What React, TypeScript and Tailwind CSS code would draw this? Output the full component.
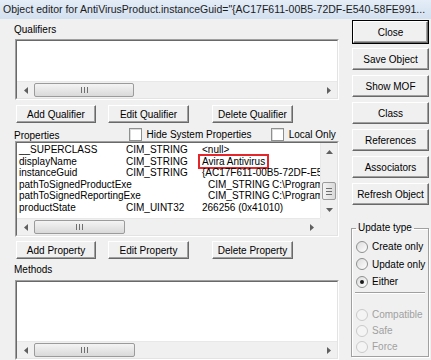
import React from 'react';

type Kids = { children?: React.ReactNode; className?: string };

function Arrow({ dir, disabled = false }: { dir: 'left' | 'right' | 'up' | 'down'; disabled?: boolean }) {
  const fill = disabled ? '#b8b8b8' : '#606060';
  const pts =
    dir === 'left' ? '4,0 4,7 0,3.5' :
    dir === 'right' ? '0,0 0,7 4,3.5' :
    dir === 'up' ? '0,4 7,4 3.5,0' : '0,0 7,0 3.5,4';
  const horiz = dir === 'left' || dir === 'right';
  return (
    <div className="w-[17px] h-[17px] shrink-0 flex items-center justify-center">
      <svg width={horiz ? 4 : 7} height={horiz ? 7 : 4} viewBox={horiz ? '0 0 4 7' : '0 0 7 4'}>
        <polygon points={pts} fill={fill} />
      </svg>
    </div>
  );
}

// horizontal scroll bar, thumb sits right after the left arrow
function HScroll({ thumb }: { thumb: number }) {
  return (
    <div className="flex h-[17px] shrink-0 bg-[#f0f0f0] border-t border-[#e8e8e8]">
      <Arrow dir="left" />
      <div className="my-[1px] flex items-center justify-center rounded-[2px] border border-[#9b9b9b] bg-gradient-to-b from-[#f4f4f4] to-[#d9d9d9]" style={{ width: thumb }}>
        <svg width="7" height="6" viewBox="0 0 7 6">
          <rect x="0" y="0" width="1" height="6" fill="#6f6f6f" />
          <rect x="3" y="0" width="1" height="6" fill="#6f6f6f" />
          <rect x="6" y="0" width="1" height="6" fill="#6f6f6f" />
        </svg>
      </div>
      <div className="flex-1" />
      <Arrow dir="right" />
    </div>
  );
}

function VScroll() {
  return (
    <div className="flex flex-col w-[17px] shrink-0 bg-[#f0f0f0] border-l border-[#e8e8e8]">
      <Arrow dir="up" />
      <div className="flex-1" />
      <div className="mx-[1px] h-[18px] flex items-center justify-center rounded-[2px] border border-[#9b9b9b] bg-gradient-to-r from-[#f4f4f4] to-[#d9d9d9]">
        <svg width="6" height="7" viewBox="0 0 6 7">
          <rect x="0" y="0" width="6" height="1" fill="#6f6f6f" />
          <rect x="0" y="3" width="6" height="1" fill="#6f6f6f" />
          <rect x="0" y="6" width="6" height="1" fill="#6f6f6f" />
        </svg>
      </div>
      <div className="h-[1px]" />
      <Arrow dir="down" />
    </div>
  );
}

function Sunken({ children, className = '' }: Kids) {
  return (
    <div className={`w-[324px] border border-t-[#a0a0a0] border-l-[#a0a0a0] border-r-white border-b-white ${className}`}>
      <div className="h-full flex flex-col border border-t-[#696969] border-l-[#696969] border-r-[#e3e3e3] border-b-[#e3e3e3] bg-white">
        {children}
      </div>
    </div>
  );
}

function Btn({ children, className = '' }: Kids) {
  return (
    <div className={`flex items-center justify-center whitespace-nowrap bg-[#f0f0f0] border border-t-white border-l-white border-r-[#696969] border-b-[#696969] shadow-[inset_-1px_-1px_0_#a0a0a0] text-black ${className}`}>
      {children}
    </div>
  );
}

function Check({ label, className = '' }: { label: string; className?: string }) {
  return (
    <div className={`flex items-center ${className}`}>
      <div className="w-[13px] h-[13px] border border-[#8e8f8f] bg-white shadow-[inset_1px_1px_0_#dcdcdc]" />
      <span className="ml-[5px]">{label}</span>
    </div>
  );
}

function Radio({ label, checked = false, disabled = false, className = '' }: { label: string; checked?: boolean; disabled?: boolean; className?: string }) {
  return (
    <div className={`flex items-center ${className}`}>
      <div className={`w-[12px] h-[12px] rounded-full border flex items-center justify-center ${disabled ? 'border-[#cacaca] bg-[#f4f4f4]' : 'border-[#8e8f8f] bg-gradient-to-br from-[#dcdcdc] to-white'}`}>
        {checked && <div className="w-[4px] h-[4px] rounded-full bg-[#1a1a1a]" />}
      </div>
      <span className={`ml-[4px] ${disabled ? 'text-[#a0a0a0]' : 'text-black'}`}>{label}</span>
    </div>
  );
}

const PROPS = [
  { name: '__SUPERCLASS', type: 'CIM_STRING', value: '<null>' },
  { name: 'displayName', type: 'CIM_STRING', value: 'Avira Antivirus', mark: true },
  { name: 'instanceGuid', type: 'CIM_STRING', value: '{AC17F611-00B5-72DF-E540-58FE991F2B1F}' },
  { name: 'pathToSignedProductExe', type: 'CIM_STRING', value: 'C:\\Program Files\\Avira\\Antivirus\\avguard.exe', long: true },
  { name: 'pathToSignedReportingExe', type: 'CIM_STRING', value: 'C:\\Program Files\\Avira\\Antivirus\\avwsc.exe', long: true },
  { name: 'productState', type: 'CIM_UINT32', value: '266256 (0x41010)' },
];

export default function App() {
  return (
    <div className="w-[431px] h-[360px] overflow-hidden bg-[#f0f0f0] flex flex-col font-['Liberation_Sans',Arial,sans-serif] text-[10px] text-black">
      {/* title bar */}
      <div className="h-[19px] shrink-0 flex items-center pl-[3px] bg-gradient-to-b from-[#e4edf8] to-[#d3e0ef] text-[10.5px] text-[#1b1b1b] whitespace-nowrap overflow-hidden">
        Object editor for AntiVirusProduct.instanceGuid="&#123;AC17F611-00B5-72DF-E540-58FE991...
      </div>

      <div className="flex flex-1 min-h-0">
        {/* left side */}
        <div className="flex flex-col pl-[15px] w-[339px] shrink-0">
          <div className="mt-[5px] h-[12px] leading-[12px] -ml-[1px]">Qualifiers</div>
          <Sunken className="mt-[3px] h-[61px]">
            <div className="flex-1" />
            <HScroll thumb={100} />
          </Sunken>

          <div className="mt-[5px] flex h-[18px]">
            <Btn className="ml-[1px] w-[80px]">Add Qualifier</Btn>
            <Btn className="ml-[12px] w-[81px]">Edit Qualifier</Btn>
            <Btn className="ml-[23px] w-[81px]">Delete Qualifier</Btn>
          </div>

          <div className="mt-[4px] h-[14px] flex items-center">
            <span className="-ml-[1px] pt-[2px]">Properties</span>
            <Check label="Hide System Properties" className="ml-[69px]" />
            <Check label="Local Only" className="ml-[19px]" />
          </div>

          <Sunken className="h-[96px]">
            <div className="flex flex-1 min-h-0">
              <div className="flex-1 min-w-0 overflow-hidden pt-[1px] pl-[2px] leading-[11.6px] whitespace-nowrap">
                {PROPS.map((p) => (
                  <div key={p.name} className="flex h-[11.6px]">
                    <span className={`shrink-0 ${p.long ? 'w-[189px]' : 'w-[107px]'}`}>{p.name}</span>
                    <span className={`shrink-0 ${p.long ? 'w-[64px]' : 'w-[76px]'}`}>{p.type}</span>
                    {p.mark ? (
                      <span className="shrink-0 -ml-[4px] -mt-[2px] h-[15px] px-[2px] border-2 border-[#e3262a] leading-[11px]">{p.value}</span>
                    ) : (
                      <span className="shrink-0">{p.value}</span>
                    )}
                  </div>
                ))}
              </div>
              <VScroll />
            </div>
            <div className="flex">
              <div className="flex-1">
                <HScroll thumb={91} />
              </div>
              <div className="w-[17px] h-[17px] bg-[#f0f0f0]" />
            </div>
          </Sunken>

          <div className="mt-[4px] flex h-[18px]">
            <Btn className="ml-[1px] w-[80px]">Add Property</Btn>
            <Btn className="ml-[12px] w-[81px]">Edit Property</Btn>
            <Btn className="ml-[23px] w-[81px]">Delete Property</Btn>
          </div>

          <div className="mt-[5px] h-[12px] leading-[12px] -ml-[1px]">Methods</div>
          <Sunken className="mt-[4px] h-[80px] shrink-0">
            <div className="flex-1" />
            <HScroll thumb={101} />
          </Sunken>
        </div>

        {/* right side */}
        <div className="ml-[13px] w-[77px] flex flex-col">
          <div className="mt-[1px] h-[24px] border border-black">
            <Btn className="h-full">Close</Btn>
          </div>
          <Btn className="mt-[4px] h-[22px]">Save Object</Btn>
          <Btn className="mt-[5px] h-[22px]">Show MOF</Btn>
          <Btn className="mt-[5px] h-[22px]">Class</Btn>
          <Btn className="mt-[5px] h-[22px]">References</Btn>
          <Btn className="mt-[5px] h-[22px]">Associators</Btn>
          <Btn className="mt-[5px] h-[22px]">Refresh Object</Btn>

          <fieldset className="mt-[17px] -ml-[1px] h-[135px] border border-[#a0a0a0] shadow-[inset_1px_1px_0_#fff,1px_1px_0_#fff]">
            <legend className="ml-[4px] px-[2px] leading-[12px]">Update type</legend>
            <div className="pl-[4px] pt-[4px] flex flex-col">
              <Radio label="Create only" className="h-[17.5px]" />
              <Radio label="Update only" className="h-[17.5px]" />
              <Radio label="Either" checked className="h-[17.5px]" />
              <div className="mt-[1px] -ml-[1px] mr-[3px] h-[2px] border-t border-[#a0a0a0] border-b border-b-white" />
              <Radio label="Compatible" disabled className="mt-[13px] h-[16px]" />
              <Radio label="Safe" disabled className="h-[16px]" />
              <Radio label="Force" disabled className="h-[16px]" />
            </div>
          </fieldset>
        </div>
      </div>
    </div>
  );
}
